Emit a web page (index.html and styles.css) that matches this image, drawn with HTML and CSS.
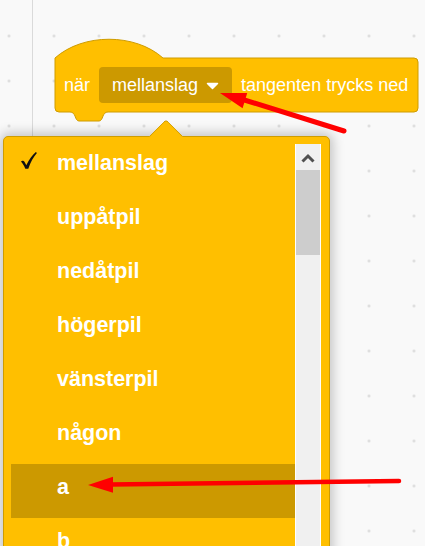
FILE: index.html
```html
<!DOCTYPE html>
<html lang="sv">
<head>
<meta charset="utf-8">
<title>Block</title>
<link rel="stylesheet" href="styles.css">
</head>
<body>
<div class="workspace">
  <div class="flyout"></div>

  <div class="hat-block">
    <svg class="block-shape" width="366" height="88" viewBox="-1 -22 366 88">
      <path d="M0,0 c28,-25 80,-25 108,0 H359 a4,4 0 0 1 4,4 V50 a4,4 0 0 1 -4,4 H53 c-3,0 -4,2 -5,4 c-1,3 -2,5 -4,5 h-20 c-2,0 -3,-2 -4,-5 c-1,-2 -2,-4 -5,-4 H4 a4,4 0 0 1 -4,-4 Z" fill="#ffbf00" stroke="#cf9c00" stroke-width="1"/>
    </svg>
    <div class="block-row">
      <span class="label">när</span>
      <span class="field">
        <span>mellanslag</span>
        <svg class="field-arrow" width="13" height="8" viewBox="0 0 13 8"><path d="M1.5,1.5 h10 l-5,5 z" fill="#fff" stroke="#fff" stroke-width="1.5" stroke-linejoin="round"/></svg>
      </span>
      <span class="label">tangenten trycks ned</span>
    </div>
  </div>

  <div class="dropdown">
    <div class="nub"></div>
    <div class="menu-body">
      <ul class="menu-list">
        <li class="item">
          <svg class="check" width="17" height="20" viewBox="0 0 17 20"><path d="M0,10.5 c1.2,-1.2 3,-0.8 4,1.2 l1.3,2.6 c3,-6 6,-10 9.6,-13.2 l1,1 c-3.4,4 -6.3,9 -8.6,15.6 h-3 c-1,-2.5 -2.3,-5 -4.3,-7.2 Z" fill="#111"/></svg>
          mellanslag
        </li>
        <li class="item">uppåtpil</li>
        <li class="item">nedåtpil</li>
        <li class="item">högerpil</li>
        <li class="item">vänsterpil</li>
        <li class="item">någon</li>
        <li class="item item-hover">a</li>
        <li class="item">b</li>
      </ul>
      <div class="scrollbar">
        <div class="scroll-up">
          <svg width="24" height="26" viewBox="0 0 24 26"><polyline points="6.5,17.5 12,12 17.5,17.5" fill="none" stroke="#505050" stroke-width="3"/></svg>
        </div>
        <div class="scroll-thumb"></div>
      </div>
    </div>
  </div>

  <svg class="annotations" width="425" height="546" viewBox="0 0 425 546">
    <line x1="344" y1="131" x2="238" y2="98" stroke="#ff0000" stroke-width="5" stroke-linecap="round"/>
    <polygon points="220,93 242.6,108.2 247.2,92.9" fill="#ff0000"/>
    <line x1="399" y1="481" x2="110" y2="484.6" stroke="#ff0000" stroke-width="4.5" stroke-linecap="round"/>
    <polygon points="88,485 113,476.8 113,492.8" fill="#ff0000"/>
  </svg>
</div>
</body>
</html>
```

FILE: styles.css
```css
* {
  box-sizing: border-box;
}

html, body {
  margin: 0;
  padding: 0;
}

body {
  width: 425px;
  height: 546px;
  overflow: hidden;
  font-family: "Liberation Sans", Arial, sans-serif;
}

.workspace {
  position: relative;
  width: 425px;
  height: 546px;
  display: flex;
  background-color: #f9f9f9;
  background-image: radial-gradient(circle, #d6d6d6 0.9px, rgba(214, 214, 214, 0) 1.6px);
  background-size: 45px 45px;
  background-position: -13.5px 13.5px;
}

.flyout {
  width: 33px;
  height: 100%;
  border-right: 1px solid #dadada;
}

/* hat block on the free canvas */
.hat-block {
  position: absolute;
  left: 54px;
  top: 36px;
  width: 366px;
  height: 88px;
}

.block-shape {
  position: absolute;
  left: 0;
  top: 0;
}

.block-row {
  position: relative;
  display: flex;
  align-items: center;
  gap: 9px;
  height: 54px;
  margin-top: 22px;
  padding-left: 10px;
  color: #ffffff;
  font-size: 18px;
  white-space: nowrap;
}

.field {
  display: flex;
  align-items: center;
  gap: 8px;
  height: 36px;
  padding: 0 13px 0 13px;
  background: #cc9900;
  border-radius: 4px;
}

.field-arrow {
  display: block;
  margin-top: 1px;
}

/* dropdown menu */
.dropdown {
  position: absolute;
  left: 3px;
  top: 136px;
  width: 327px;
  height: 440px;
  background: #ffbf00;
  border: 1px solid #cf9c00;
  border-radius: 5px;
  box-shadow: 0 0 12px 3px rgba(0, 0, 0, 0.22);
}

.nub {
  position: absolute;
  left: 150px;
  top: -13px;
  width: 24px;
  height: 24px;
  background: #ffbf00;
  border-top: 1px solid #cf9c00;
  border-left: 1px solid #cf9c00;
  border-top-left-radius: 4px;
  transform: rotate(45deg);
  z-index: 2;
}

.menu-body {
  position: relative;
  z-index: 3;
  display: flex;
  padding: 3px 8px 0 7px;
}

.menu-list {
  list-style: none;
  margin: 0;
  padding: 0;
  width: 284px;
}

.item {
  position: relative;
  height: 54px;
  line-height: 46px;
  padding-left: 46px;
  color: #ffffff;
  font-weight: bold;
  font-size: 21.5px;
}

.item-hover {
  background: #cc9900;
}

.check {
  position: absolute;
  left: 10px;
  top: 11px;
}

.scrollbar {
  width: 26px;
  height: 420px;
  margin-top: 4px;
  background: #f0f0f0;
  border-left: 1px solid #ffffff;
  border-right: 1px solid #ffffff;
}

.scroll-up {
  height: 26px;
}

.scroll-up svg {
  display: block;
}

.scroll-thumb {
  height: 85px;
  background: #cdcdcd;
}

.annotations {
  position: absolute;
  left: 0;
  top: 0;
  z-index: 10;
  pointer-events: none;
}
```
